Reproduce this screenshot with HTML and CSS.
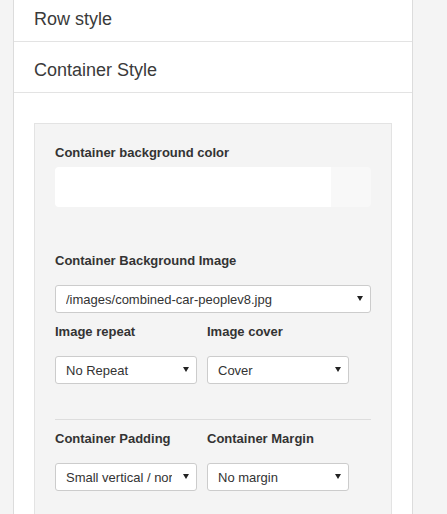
FILE: index.html
```html
<!DOCTYPE html>
<html>
<head>
<meta charset="utf-8">
<link rel="stylesheet" href="styles.css">
</head>
<body>
<div class="panel">
  <div class="panel-head">Row style</div>
  <div class="panel-head">Container Style</div>
  <div class="panel-body">
    <div class="well">
      <label class="lbl lbl-tight">Container background color</label>
      <div class="color-group">
        <div class="color-input"></div>
        <div class="color-addon"></div>
      </div>

      <label class="lbl">Container Background Image</label>
      <div class="sel-wrap sel-full">
        <select class="sel"><option>/images/combined-car-peoplev8.jpg</option></select>
      </div>

      <div class="row">
        <div class="col">
          <label class="lbl">Image repeat</label>
          <div class="sel-wrap"><select class="sel"><option>No Repeat</option></select></div>
        </div>
        <div class="col">
          <label class="lbl">Image cover</label>
          <div class="sel-wrap"><select class="sel"><option>Cover</option></select></div>
        </div>
      </div>

      <hr class="divider">

      <div class="row">
        <div class="col">
          <label class="lbl">Container Padding</label>
          <div class="sel-wrap"><select class="sel"><option>Small vertical / normal horizontal</option></select></div>
        </div>
        <div class="col">
          <label class="lbl">Container Margin</label>
          <div class="sel-wrap"><select class="sel"><option>No margin</option></select></div>
        </div>
      </div>
    </div>
  </div>
</div>
</body>
</html>
```
FILE: styles.css
```css
html, body {
  margin: 0;
  padding: 0;
  background: #f4f4f4;
  font-family: "Liberation Sans", Arial, sans-serif;
  color: #333;
  overflow: hidden;
}

.panel {
  margin: -9px 0 0 13px;
  width: 398px;
  background: #fff;
  border-left: 1px solid #dcdcdc;
  border-right: 1px solid #dcdcdc;
}

.panel-head {
  padding: 18px 20px 12px;
  font-size: 18px;
  line-height: 20px;
  color: #3a3a3a;
  border-bottom: 1px solid #e3e3e3;
}

.panel-body {
  padding: 30px 20px 20px;
}

.well {
  background: #f4f4f4;
  border: 1px solid #e3e3e3;
  padding: 20px 20px 60px;
}

.lbl {
  display: block;
  font-size: 13px;
  line-height: 18px;
  font-weight: bold;
  color: #333;
  margin: 0 0 15px;
}

.lbl-tight {
  margin-bottom: 5px;
}

.color-group {
  display: flex;
  height: 40px;
  margin-bottom: 45px;
}

.color-input {
  flex: 1;
  background: #fff;
  border-radius: 4px 0 0 4px;
}

.color-addon {
  width: 40px;
  background: #f8f8f8;
  border-radius: 0 4px 4px 0;
}

.sel-wrap {
  position: relative;
  height: 28px;
}

.sel-full {
  margin-bottom: 10px;
}

.sel-wrap::after {
  content: "";
  position: absolute;
  right: 8px;
  top: 11px;
  border-left: 3px solid transparent;
  border-right: 3px solid transparent;
  border-top: 5px solid #222;
  pointer-events: none;
}

.sel {
  appearance: none;
  -webkit-appearance: none;
  display: block;
  width: 100%;
  height: 28px;
  box-sizing: border-box;
  margin: 0;
  padding: 0 24px 0 10px;
  border: 1px solid #ccc;
  border-radius: 3px;
  background: #fff;
  font-family: "Liberation Sans", Arial, sans-serif;
  font-size: 13px;
  color: #333;
  outline: none;
}

.row {
  display: flex;
  gap: 10px;
}

.col {
  width: 142px;
}

.divider {
  border: 0;
  border-top: 1px solid #ddd;
  margin: 35px 0 10px;
  height: 0;
}
```
